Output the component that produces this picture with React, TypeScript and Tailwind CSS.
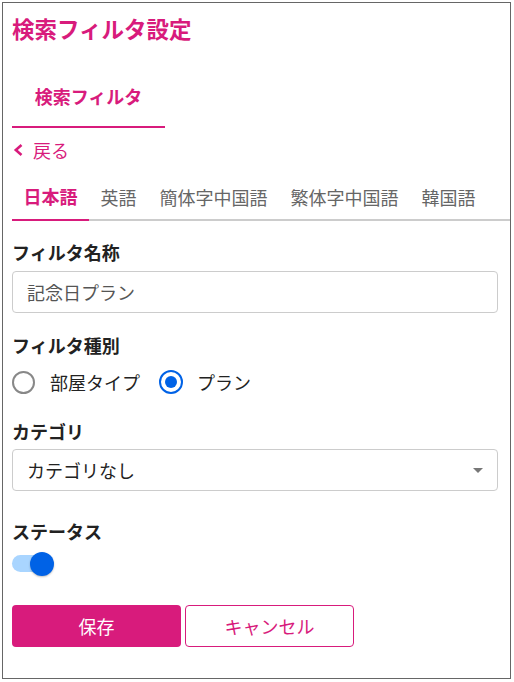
import React from "react";

export default function App() {
  const langs = ["日本語", "英語", "簡体字中国語", "繁体字中国語", "韓国語"];
  return (
    <div
      className="m-[2px] w-[509px] h-[677px] border border-[#666] bg-white pl-[9px] flex flex-col text-[#222]"
      style={{ fontFamily: '"Noto Sans CJK JP", "Noto Sans", sans-serif' }}
    >
      <div className="h-[50px] flex items-center text-[22.5px] font-bold text-[#d81b7c] leading-none">
        検索フィルタ設定
      </div>
      <div className="mt-[13px] flex">
        <div className="h-[62px] w-[153px] border-b-2 border-[#d81b7c] flex items-center justify-center text-[18px] font-bold text-[#d81b7c] leading-none">
          検索フィルタ
        </div>
      </div>
      <div className="h-[44px] flex items-center text-[18px] text-[#d81b7c] leading-none gap-[10px]">
        <svg width="10" height="12" viewBox="0 0 10 12" className="ml-[1px]">
          <path d="M8.5 1 L2.8 6 L8.5 11" fill="none" stroke="#d81b7c" strokeWidth="2.6" />
        </svg>
        <span>戻る</span>
      </div>
      <div className="flex border-b-2 border-[#cccccc] h-[49px]">
        {langs.map((l, i) => (
          <div
            key={l}
            className={
              i === 0
                ? "h-[49px] -mb-[2px] border-b-2 border-[#d81b7c] px-[11.5px] flex items-center text-[18px] font-bold text-[#d81b7c] leading-none"
                : "h-[49px] px-[11.5px] flex items-center text-[18px] text-[#666] leading-none"
            }
          >
            {l}
          </div>
        ))}
      </div>

      <div className="mt-[18px] h-[26px] flex items-center text-[18px] font-bold leading-none">フィルタ名称</div>
      <div className="mt-[6px] w-[486px] h-[42px] border border-[#cccccc] rounded-[4px] flex items-center px-[14px] text-[18px] text-[#555] leading-none">
        記念日プラン
      </div>

      <div className="mt-[19px] h-[26px] flex items-center text-[18px] font-bold leading-none">フィルタ種別</div>
      <div className="mt-[12px] h-[24px] flex items-center text-[18px] leading-none">
        <div className="w-[23px] h-[23px] rounded-full border-2 border-[#888]" />
        <span className="ml-[15px]">部屋タイプ</span>
        <div className="ml-[19px] w-[24px] h-[24px] rounded-full border-2 border-[#0062e6] flex items-center justify-center">
          <div className="w-[12px] h-[12px] rounded-full bg-[#0062e6]" />
        </div>
        <span className="ml-[14px]">プラン</span>
      </div>

      <div className="mt-[24px] h-[26px] flex items-center text-[18px] font-bold leading-none">カテゴリ</div>
      <div className="mt-[5px] w-[486px] h-[42px] border border-[#cccccc] rounded-[4px] flex items-center justify-between pl-[14px] pr-[14px] text-[18px] text-[#222] leading-none">
        <span>カテゴリなし</span>
        <svg width="10" height="5" viewBox="0 0 10 5">
          <path d="M0 0 H10 L5 5 Z" fill="#777" />
        </svg>
      </div>

      <div className="mt-[27px] h-[26px] flex items-center text-[18px] font-bold leading-none">ステータス</div>
      <div className="mt-[8px] h-[24px] relative w-[44px]">
        <div className="absolute left-0 top-[3px] w-[38px] h-[17px] rounded-full bg-[#a9d5ff]" />
        <div className="absolute left-[18px] top-0 w-[24px] h-[24px] rounded-full bg-[#0062e6] shadow-[0_1px_2px_rgba(0,0,0,0.25)]" />
      </div>

      <div className="mt-[29px] flex gap-[4px]">
        <div className="w-[169px] h-[42px] rounded-[4px] bg-[#d81b7c] flex items-center justify-center text-white text-[18px] leading-none">
          保存
        </div>
        <div className="w-[169px] h-[42px] rounded-[4px] border border-[#d81b7c] bg-white flex items-center justify-center text-[#d81b7c] text-[18px] leading-none">
          キャンセル
        </div>
      </div>
    </div>
  );
}
